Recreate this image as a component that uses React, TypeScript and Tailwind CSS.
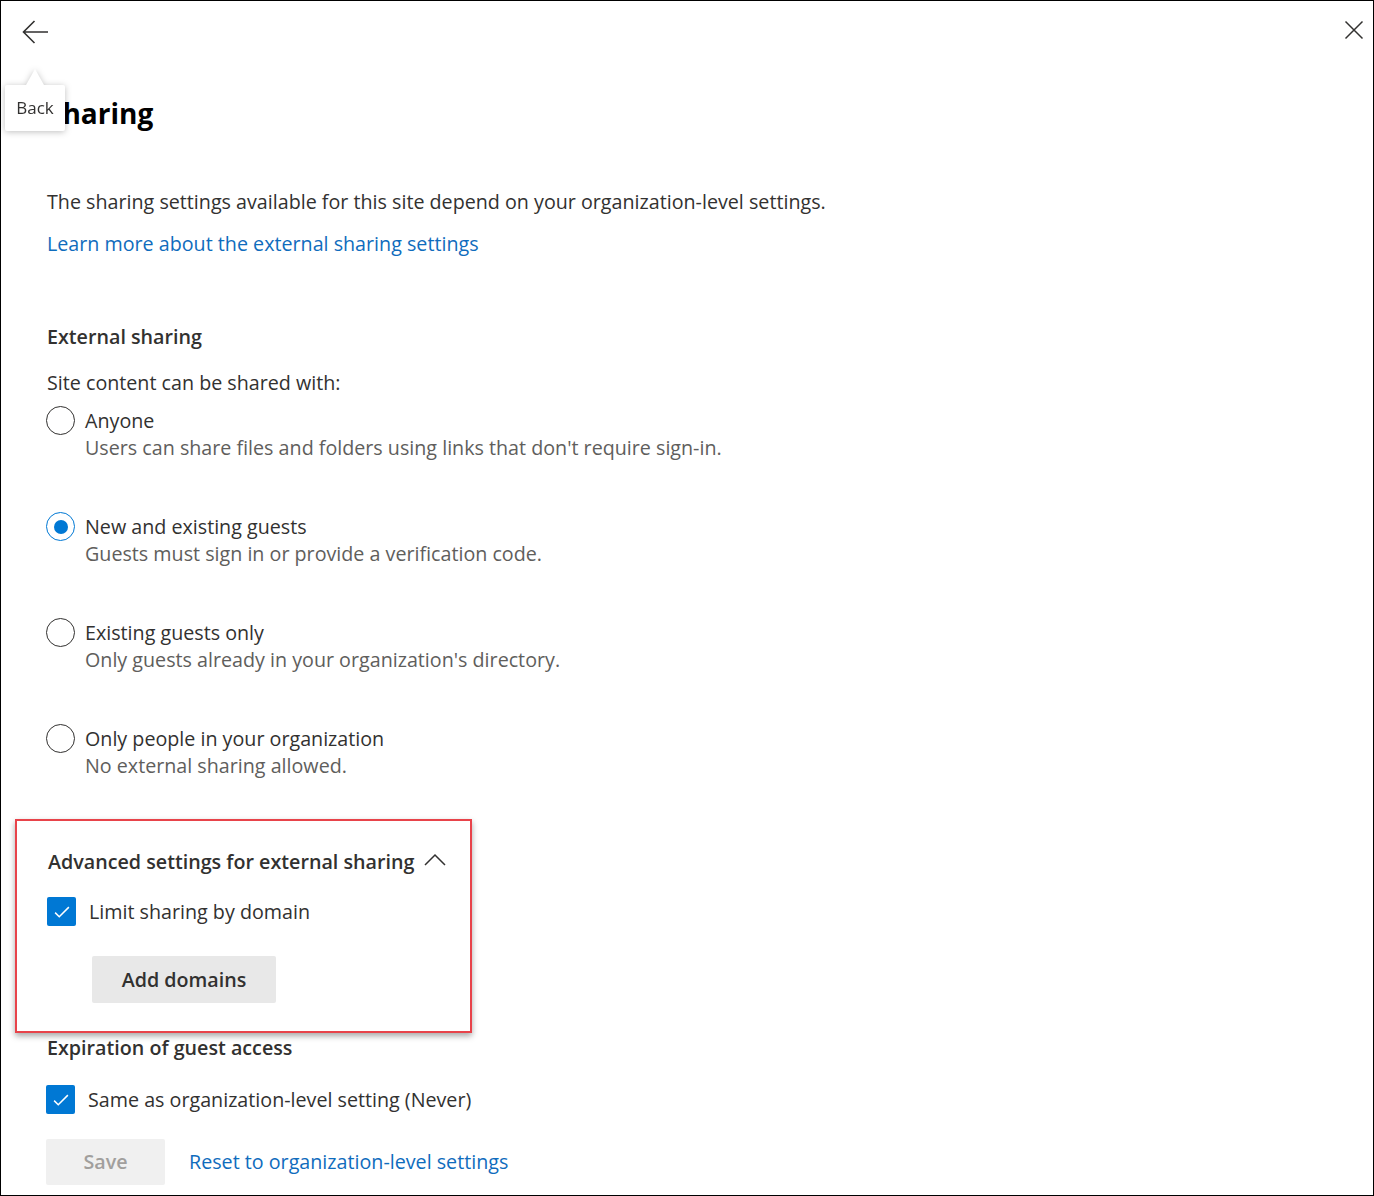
import React from "react";

const options = [
  {
    label: "Anyone",
    desc: "Users can share files and folders using links that don't require sign-in.",
    checked: false,
  },
  {
    label: "New and existing guests",
    desc: "Guests must sign in or provide a verification code.",
    checked: true,
  },
  {
    label: "Existing guests only",
    desc: "Only guests already in your organization's directory.",
    checked: false,
  },
  {
    label: "Only people in your organization",
    desc: "No external sharing allowed.",
    checked: false,
  },
];

const Radio = ({ checked }: { checked: boolean }) => (
  <div
    className={`w-[29px] h-[29px] shrink-0 rounded-full border flex items-center justify-center ${
      checked ? "border-[#0078d4]" : "border-[#323130]"
    }`}
  >
    {checked && <div className="w-[14px] h-[14px] rounded-full bg-[#0078d4]" />}
  </div>
);

const Checkbox = () => (
  <div className="w-[29px] h-[29px] shrink-0 rounded-[2px] bg-[#0078d4] flex items-center justify-center">
    <svg width="20" height="20" viewBox="0 0 16 16" fill="none">
      <path d="M2.5 8.5l3.3 3.3 7.7-7.7" stroke="white" strokeWidth="1.2" />
    </svg>
  </div>
);

const App = () => {
  return (
    <div className="relative w-[1374px] h-[1196px] overflow-hidden border border-black bg-white text-[#323130] font-['Segoe_UI','Open_Sans',sans-serif]">
      <div className="flex justify-between pl-[21px] pr-[9px] pt-[19px]">
        <svg width="27" height="24" viewBox="0 0 27 24" fill="none">
          <path d="M1 12h25M12.5 1L1.5 12l11 11" stroke="#323130" strokeWidth="1.6" />
        </svg>
        <svg width="20" height="20" viewBox="0 0 20 20" fill="none">
          <path d="M1.5 1.5l17 17M18.5 1.5l-17 17" stroke="#323130" strokeWidth="1.5" />
        </svg>
      </div>

      {/* tooltip */}
      <div className="absolute left-[4px] top-[68px] z-10 drop-shadow-[0_1px_3px_rgba(0,0,0,0.25)]">
        <div className="ml-[21px] w-0 h-0 border-l-[9px] border-r-[9px] border-b-[16px] border-l-transparent border-r-transparent border-b-white" />
        <div className="w-[60px] h-[46px] bg-white rounded-[2px] flex items-center justify-center text-[17px]">
          Back
        </div>
      </div>

      <div className="pl-[46px] text-[19.7px]">
        <h1 className="mt-[49px] text-[28px] leading-[40px] font-bold text-black">Sharing</h1>
        <p className="mt-[55px] leading-[28px]">
          The sharing settings available for this site depend on your organization-level settings.
        </p>
        <a className="block mt-[14px] leading-[28px] text-[#0f6cbd]">
          Learn more about the external sharing settings
        </a>

        <h2 className="mt-[65px] leading-[28px] font-semibold">External sharing</h2>
        <p className="mt-[18px] leading-[28px]">Site content can be shared with:</p>

        <div className="mt-[10px] -ml-[1px] flex flex-col gap-[52px]">
          {options.map((o) => (
            <div key={o.label} className="flex flex-col">
              <div className="flex items-center gap-[10px] h-[27px]">
                <Radio checked={o.checked} />
                <span className="leading-[27px]">{o.label}</span>
              </div>
              <span className="pl-[39px] leading-[27px] text-[#605e5c]">{o.desc}</span>
            </div>
          ))}
        </div>

        <div className="mt-[40px] -ml-[32px] w-[457px] border-2 border-[#e8434a] pl-[31px] pt-[27px] pb-[28px] shadow-[0_3px_6px_rgba(0,0,0,0.35)]">
          <div className="flex items-center gap-[10px]">
            <span className="leading-[28px] font-semibold">Advanced settings for external sharing</span>
            <svg width="22" height="14" viewBox="0 0 22 14" fill="none" className="-mt-[4px]">
              <path d="M1 12L11 2l10 10" stroke="#323130" strokeWidth="1.5" />
            </svg>
          </div>
          <div className="mt-[21px] -ml-[1px] flex items-center gap-[13px]">
            <Checkbox />
            <span className="leading-[28px]">Limit sharing by domain</span>
          </div>
          <button className="mt-[30px] ml-[44px] w-[184px] h-[47px] rounded-[2px] bg-[#e8e8e8] font-semibold">
            Add domains
          </button>
        </div>

        <h2 className="mt-[1px] leading-[28px] font-semibold">Expiration of guest access</h2>
        <div className="mt-[23px] -ml-[1px] flex items-center gap-[13px]">
          <Checkbox />
          <span className="leading-[28px]">Same as organization-level setting (Never)</span>
        </div>
        <div className="mt-[25px] -ml-[1px] flex items-center gap-[24px]">
          <button className="w-[119px] h-[46px] rounded-[2px] bg-[#f0f0f0] font-semibold text-[#a19f9d]">
            Save
          </button>
          <a className="leading-[28px] text-[#0f6cbd]">Reset to organization-level settings</a>
        </div>
      </div>
    </div>
  );
};

export default App;
